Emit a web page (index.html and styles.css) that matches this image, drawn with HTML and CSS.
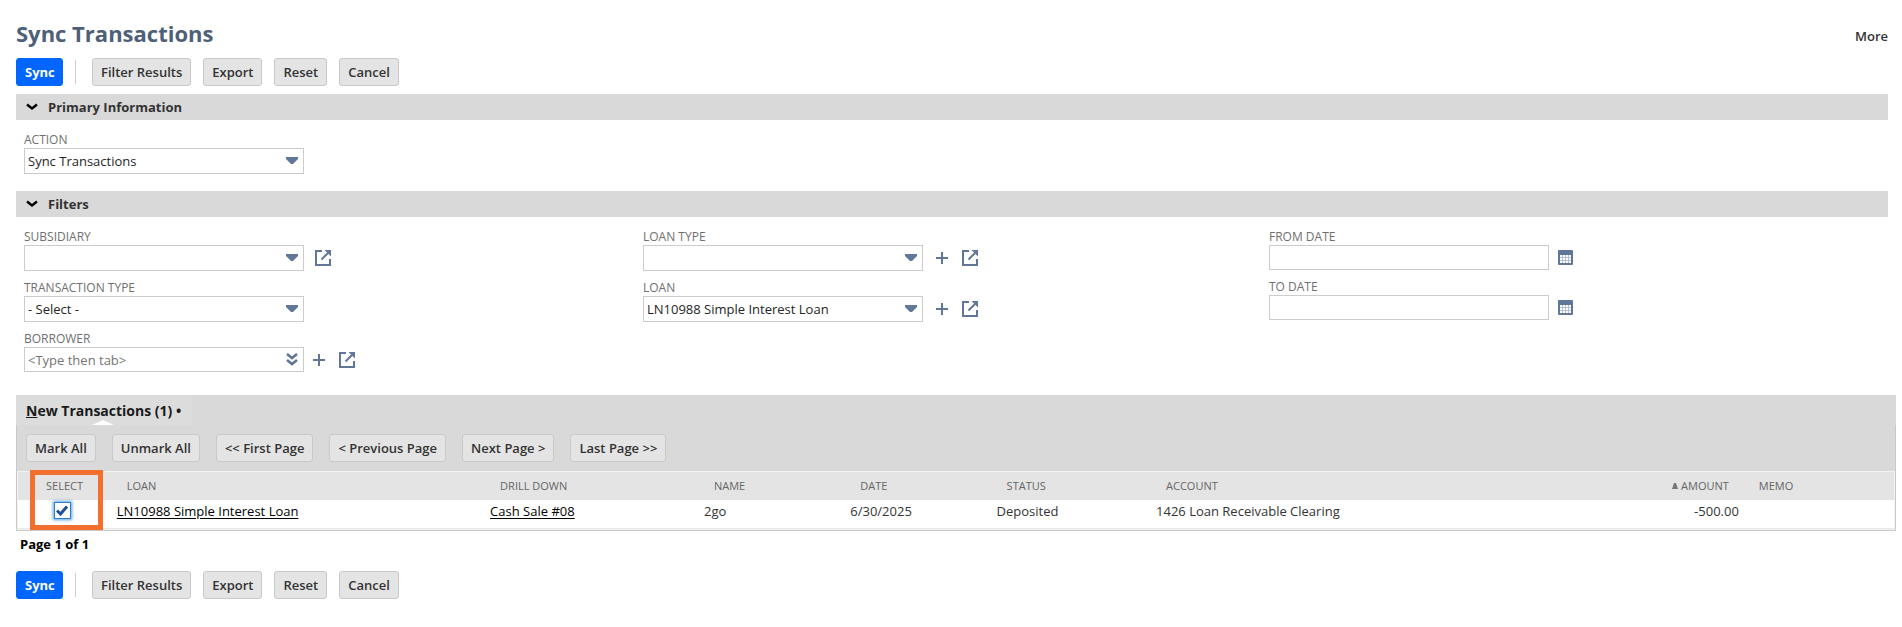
FILE: index.html
```html
<!DOCTYPE html>
<html lang="en">
<head>
<meta charset="utf-8">
<title>Sync Transactions</title>
<link rel="stylesheet" href="styles.css">
</head>
<body>
<svg class="defs" aria-hidden="true">
  <symbol id="chevron" viewBox="0 0 12 8"><path d="M1 1.5 6 5.5 11 1.5" fill="none" stroke="#000" stroke-width="2.4"/></symbol>
  <symbol id="caret" viewBox="0 0 12 8"><path d="M0 0H12V2L7 7H5L0 2Z" fill="#607799"/></symbol>
  <symbol id="double" viewBox="0 0 12 13"><path d="M1 1 6 5 11 1M1 7 6 11 11 7" fill="none" stroke="#607799" stroke-width="2.6"/></symbol>
  <symbol id="plus" viewBox="0 0 12 12"><path d="M0 6H12M6 0V12" stroke="#607799" stroke-width="2"/></symbol>
  <symbol id="open" viewBox="0 0 16 16"><path d="M7 1H1V15H15V9" fill="none" stroke="#607799" stroke-width="2"/><path d="M6.5 9.500 13 3" stroke="#607799" stroke-width="2"/><path d="M9.500 0H16V6.500L13.500 4 12 2.500Z" fill="#607799"/></symbol>
  <symbol id="calendar" viewBox="0 0 15 15"><rect width="15" height="15" rx="1" fill="#607799"/><path d="M2 5H13V13H2Z" fill="#fff"/><path d="M4.500 5V13M7.500 5V13M10.500 5V13M2 7.500H13M2 10.500H13" stroke="#b5c0cf"/></symbol>
</svg>
<main class="page">
  <header class="head">
    <h1 class="title">Sync Transactions</h1>
    <a class="more" href="#">More</a>
  </header>
  <div class="actions">
    <button class="btn primary">Sync</button>
    <span class="divider"></span>
    <button class="btn">Filter Results</button>
    <button class="btn">Export</button>
    <button class="btn">Reset</button>
    <button class="btn">Cancel</button>
  </div>

  <h2 class="bar"><svg class="chevron"><use href="#chevron"/></svg>Primary Information</h2>
  <div class="fields">
    <div class="column">
      <div class="field">
        <label for="action">ACTION</label>
        <div class="line"><span class="box"><select id="action"><option>Sync Transactions</option></select><svg class="caret"><use href="#caret"/></svg></span></div>
      </div>
    </div>
  </div>

  <h2 class="bar"><svg class="chevron"><use href="#chevron"/></svg>Filters</h2>
  <div class="fields filters">
    <div class="column">
      <div class="field">
        <label for="subsidiary">SUBSIDIARY</label>
        <div class="line"><span class="box"><select id="subsidiary"><option></option></select><svg class="caret"><use href="#caret"/></svg></span><button class="icon" aria-label="Open subsidiary"><svg class="open"><use href="#open"/></svg></button></div>
      </div>
      <div class="field">
        <label for="type">TRANSACTION TYPE</label>
        <div class="line"><span class="box"><select id="type"><option>- Select -</option></select><svg class="caret"><use href="#caret"/></svg></span></div>
      </div>
      <div class="field">
        <label for="borrower">BORROWER</label>
        <div class="line tight"><span class="box"><input id="borrower" type="text" placeholder="&lt;Type then tab&gt;"><svg class="double"><use href="#double"/></svg></span><button class="icon" aria-label="Add borrower"><svg class="plus"><use href="#plus"/></svg></button><button class="icon" aria-label="Open borrower"><svg class="open"><use href="#open"/></svg></button></div>
      </div>
    </div>
    <div class="column">
      <div class="field">
        <label for="loantype">LOAN TYPE</label>
        <div class="line wide"><span class="box"><select id="loantype"><option></option></select><svg class="caret"><use href="#caret"/></svg></span><button class="icon" aria-label="Add loan type"><svg class="plus"><use href="#plus"/></svg></button><button class="icon" aria-label="Open loan type"><svg class="open"><use href="#open"/></svg></button></div>
      </div>
      <div class="field">
        <label for="loan">LOAN</label>
        <div class="line wide"><span class="box"><select id="loan"><option>LN10988 Simple Interest Loan</option></select><svg class="caret"><use href="#caret"/></svg></span><button class="icon" aria-label="Add loan"><svg class="plus"><use href="#plus"/></svg></button><button class="icon" aria-label="Open loan"><svg class="open"><use href="#open"/></svg></button></div>
      </div>
    </div>
    <div class="column">
      <div class="field">
        <label for="from">FROM DATE</label>
        <div class="line tight"><span class="box"><input id="from" type="text"></span><button class="icon" aria-label="Pick from date"><svg class="calendar"><use href="#calendar"/></svg></button></div>
      </div>
      <div class="field">
        <label for="to">TO DATE</label>
        <div class="line tight"><span class="box"><input id="to" type="text"></span><button class="icon" aria-label="Pick to date"><svg class="calendar"><use href="#calendar"/></svg></button></div>
      </div>
    </div>
  </div>

  <section class="panel">
    <div class="tabs"><a class="tab" href="#"><u>N</u>ew Transactions (1) •</a></div>
    <div class="sheet">
      <div class="paging">
        <button class="btn">Mark All</button>
        <button class="btn">Unmark All</button>
        <button class="btn">&lt;&lt; First Page</button>
        <button class="btn">&lt; Previous Page</button>
        <button class="btn">Next Page &gt;</button>
        <button class="btn">Last Page &gt;&gt;</button>
      </div>
      <div class="list">
        <table>
          <colgroup><col class="c-select"><col class="c-loan"><col class="c-drill"><col class="c-name"><col class="c-date"><col class="c-status"><col class="c-account"><col class="c-amount"><col class="c-memo"></colgroup>
          <thead><tr><th class="select">SELECT</th><th>LOAN</th><th>DRILL DOWN</th><th>NAME</th><th>DATE</th><th>STATUS</th><th>ACCOUNT</th><th class="amount"><svg class="sort" viewBox="0 0 6 6"><path d="M2 0H4L6 6H0Z"/></svg>AMOUNT</th><th>MEMO</th></tr></thead>
          <tbody><tr><td class="select"><input type="checkbox" class="check" aria-label="Select transaction" checked></td><td><a href="#">LN10988 Simple Interest Loan</a></td><td><a href="#">Cash Sale #08</a></td><td>2go</td><td>6/30/2025</td><td>Deposited</td><td>1426 Loan Receivable Clearing</td><td class="amount">-500.00</td><td></td></tr></tbody>
        </table>
        <span class="highlight"></span>
        <svg class="tick" viewBox="0 0 12 11"><path d="M1 5.500 4.500 9 11 1.500" fill="none" stroke="#1f4f96" stroke-width="3"/></svg>
      </div>
    </div>
  </section>
  <p class="count">Page 1 of 1</p>
  <div class="actions bottom">
    <button class="btn primary">Sync</button>
    <span class="divider"></span>
    <button class="btn">Filter Results</button>
    <button class="btn">Export</button>
    <button class="btn">Reset</button>
    <button class="btn">Cancel</button>
  </div>
</main>
</body>
</html>
```
FILE: styles.css
```css
* { box-sizing: border-box; }
body {
  margin: 0;
  background: #fff;
  color: #333;
  font: 13px/18px "Open Sans", "Noto Sans", sans-serif;
}
svg { display: block; }
.defs { position: absolute; width: 0; height: 0; }
.page { padding: 18px 6px 0 16px; }
.head {
  display: flex;
  justify-content: space-between;
  align-items: center;
  height: 32px;
  margin-right: 8px;
}
.title { margin: 0; padding-bottom: 2px; color: #4d5f79; font-size: 22px; line-height: 30px; font-weight: 700; }
.more { padding-top: 4px; color: #333; font-weight: 600; text-decoration: none; }
.actions { display: flex; align-items: center; gap: 12px; padding: 8px 0; }
.divider { width: 1px; height: 24px; margin-right: 4px; background: #ccc; }
.btn {
  height: 28px;
  padding: 0 8px;
  border: 1px solid #c8c8c8;
  border-radius: 3px;
  background: #e4e4e4;
  color: #333;
  font: 600 13px/18px "Open Sans", "Noto Sans", sans-serif;
  white-space: nowrap;
}
.primary { width: 47px; border-color: #06f; background: #06f; color: #fff; font-weight: 700; }
.bar {
  display: flex;
  align-items: center;
  gap: 10px;
  height: 26px;
  margin: 0 8px 0 0;
  padding: 0 10px;
  background: #d9d9d9;
  color: #333;
  font-size: 13px;
  font-weight: 700;
}
.chevron { width: 12px; height: 8px; }
.fields {
  display: grid;
  grid-template-columns: 619fr 626fr 619fr;
  padding: 11px 8px 17px 8px;
}
.filters { padding-bottom: 23px; }
.field label { display: block; height: 17px; color: #6f6f6f; font-size: 12px; line-height: 18px; }
.column { display: flex; flex-direction: column; gap: 8px; }
.line { display: flex; align-items: center; gap: 11px; }
.line.tight { gap: 9px; }
.line.wide { gap: 13px; }
.box { position: relative; width: 280px; }
.box select, .box input {
  display: block;
  width: 100%;
  height: 26px;
  margin: 0;
  padding: 0 24px 0 3px;
  border: 1px solid #ccc;
  border-radius: 0;
  background: #fff;
  color: #262626;
  font: 13px/18px "Open Sans", "Noto Sans", sans-serif;
  appearance: none;
}
.box input { height: 25px; }
.box input::placeholder { color: #757575; opacity: 1; }
.caret { position: absolute; right: 6px; top: 9px; width: 12px; height: 8px; pointer-events: none; }
.double { position: absolute; right: 6px; top: 6px; width: 12px; height: 13px; }
.icon { padding: 0; border: 0; background: none; }
.icon + .icon { margin-left: 3px; }
.tight .icon + .icon { margin-left: 5px; }
.wide .icon + .icon { margin-left: 1px; }
.plus { width: 12px; height: 12px; }
.open { width: 16px; height: 16px; }
.calendar { width: 15px; height: 15px; }
.tabs { display: flex; height: 30px; background: #d9d9d9; }
.tab {
  position: relative;
  width: 176px;
  padding: 0 10px;
  background: #dcdcdc;
  color: #1a1a1a;
  font-size: 14px;
  line-height: 32px;
  font-weight: 700;
  text-decoration: none;
  white-space: nowrap;
}
.tab::after {
  content: "";
  position: absolute;
  left: 76px;
  bottom: 0;
  border: 11px solid transparent;
  border-top: 0;
  border-bottom: 5px solid #fff;
}
.sheet { border: 1px solid #c8c8c8; border-top: 0; background: #d9d9d9; }
.paging { display: flex; gap: 16px; padding: 9px; }
.list { position: relative; border: 1px solid #f2f2f2; }
table { width: 100%; border-collapse: collapse; table-layout: fixed; background: #fff; }
.c-select { width: 5%; }
.c-loan { width: 19.9%; }
.c-drill { width: 11.4%; }
.c-name { width: 7.8%; }
.c-date { width: 7.8%; }
.c-status { width: 8.5%; }
.c-account { width: 23.6%; }
.c-amount { width: 8%; }
th {
  height: 28px;
  padding: 0 15px;
  background: #e4e4e4;
  color: #666;
  font-size: 11px;
  font-weight: 400;
  line-height: 18px;
  text-align: left;
}
td { height: 28px; padding: 2px 5px 0; border-bottom: 1px solid #e8e8e8; vertical-align: top; }
td a { color: #000; text-underline-offset: 2px; }
th.select { padding: 0 0 0 28px; }
td.select { padding: 2px 0 0 36px; }
th.amount, td.amount { text-align: right; }
.sort { display: inline-block; width: 6px; height: 6px; margin-right: 3px; vertical-align: 1px; fill: #777; }
.check {
  display: block;
  width: 17px;
  height: 17px;
  margin: 0;
  appearance: none;
  border: 1px solid #2a7fd0;
  background: #fff;
  box-shadow: 0 0 3px 1px #5a9fe0;
}
.tick { position: absolute; left: 38px; top: 33px; width: 12px; height: 11px; pointer-events: none; }
.highlight {
  position: absolute;
  left: 12px;
  top: -2px;
  width: 73px;
  height: 60px;
  border: 5px solid #f26f2e;
  pointer-events: none;
}
.count { margin: 0; padding: 4px; color: #000; font-weight: 700; }
.bottom { padding-top: 14px; }
```
